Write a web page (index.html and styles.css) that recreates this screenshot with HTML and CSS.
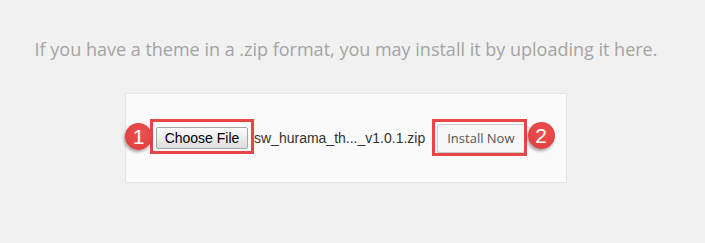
FILE: index.html
```html
<!DOCTYPE html>
<html>
  <head>
    <meta charset="utf-8" />
    <title>Upload Theme</title>
    <link rel="stylesheet" href="styles.css">
  </head>
  <body>
    <div class="upload-theme">
      <p class="install-help">If you have a theme in a .zip format, you may install it by uploading it here.</p>
      <form class="upload-form" onsubmit="event.preventDefault()">
        <span class="callout callout--file">
          <span class="file-input">
            <button class="file-input__button" type="button">Choose File</button>
            <span class="file-input__name">sw_hurama_th..._v1.0.1.zip</span>
          </span>
          <span class="callout__frame"></span>
          <span class="callout__badge">1</span>
        </span>
        <span class="callout callout--submit">
          <button class="button" type="submit">Install Now</button>
          <span class="callout__frame"></span>
          <span class="callout__badge">2</span>
        </span>
      </form>
    </div>
  </body>
</html>
```

FILE: styles.css
```css
body {
  margin: 0;
  background: #f1f1f1;
  font-family: "Open Sans", sans-serif;
}

.upload-theme {
  width: 692px;
}

.install-help {
  margin: 0;
  padding: 36px 0 0;
  text-align: center;
  font-size: 18px;
  line-height: 26px;
  color: #a4a4a4;
}

.upload-form {
  display: flex;
  align-items: center;
  width: 380px;
  height: 28px;
  margin: 31px auto 0;
  padding: 30px;
  background: #fafafa;
  border: 1px solid #e5e5e5;
}

.callout {
  position: relative;
  display: inline-flex;
  align-items: center;
}

.file-input {
  display: inline-flex;
  align-items: center;
}

.file-input__button {
  width: 92px;
  height: 22px;
  padding: 0;
  font: 14px "Liberation Sans", Arial, sans-serif;
  color: #000;
  background: linear-gradient(#fbfbfb, #dedede);
  border: 1px solid #a6a6a6;
  border-radius: 2px;
}

.file-input__name {
  margin-left: 6px;
  font: 14px "Liberation Sans", Arial, sans-serif;
  color: #333;
  white-space: nowrap;
}

.button {
  height: 29px;
  margin-left: 12px;
  padding: 0 9px 1px;
  font: 13px "Open Sans", sans-serif;
  color: #555;
  white-space: nowrap;
  background: #f7f7f7;
  border: 1px solid #cccccc;
  border-radius: 3px;
  box-shadow: 0 1px 0 #cccccc;
  cursor: pointer;
}

/* annotation overlay */
.callout__frame {
  position: absolute;
  border: 3px solid #e84646;
  pointer-events: none;
}

.callout--file .callout__frame {
  left: -6px;
  top: -8px;
  bottom: -5px;
  width: 104px;
  box-sizing: border-box;
}

.callout--submit .callout__frame {
  left: 7px;
  right: -2px;
  top: -5px;
  bottom: -3px;
}

.callout__badge {
  position: absolute;
  width: 27px;
  height: 27px;
  border-radius: 50%;
  background: radial-gradient(circle at 55% 40%, #ef5050, #d93c3c);
  box-shadow: -1px 2px 3px rgba(0, 0, 0, 0.35);
  color: #fff;
  font: 21px/27px "Liberation Sans", Arial, sans-serif;
  text-align: center;
}

.callout--file .callout__badge {
  left: -31px;
  top: -4px;
}

.callout--submit .callout__badge {
  right: -30px;
  top: -2px;
}
```
